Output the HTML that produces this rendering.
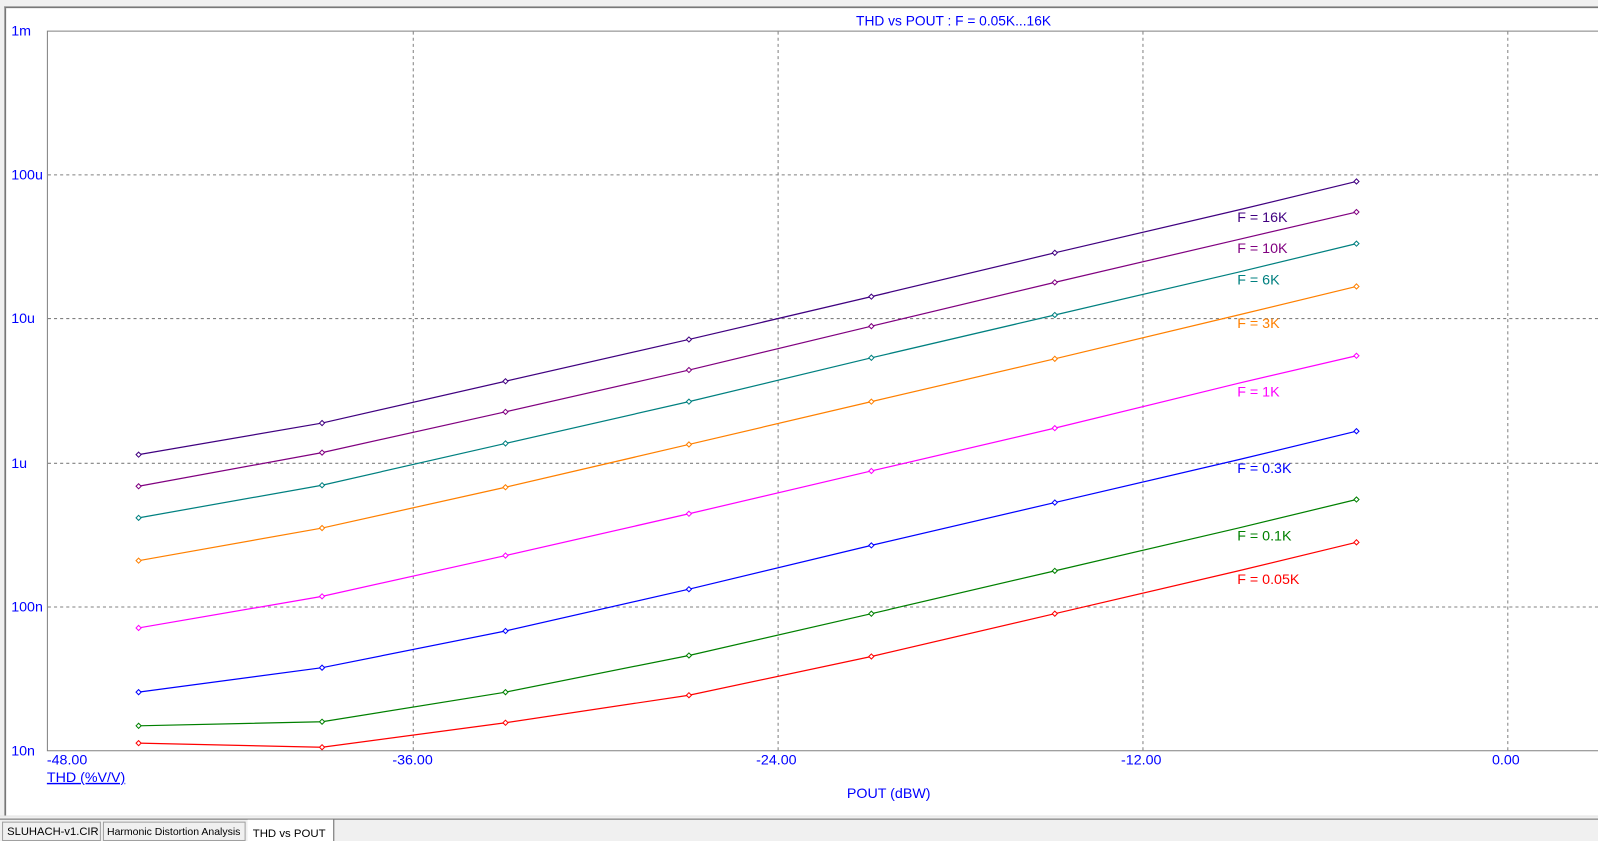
<!DOCTYPE html>
<html><head><meta charset="utf-8"><style>
html,body{margin:0;padding:0;background:#fff;overflow:hidden}
svg{display:block}
text{font-family:"Liberation Sans",sans-serif}
</style></head><body>
<svg width="1598" height="841" viewBox="0 0 1568 825" preserveAspectRatio="none" xmlns="http://www.w3.org/2000/svg">
<rect x="0" y="0" width="1568" height="825" fill="#fff"/>
<rect x="0" y="0" width="1568" height="6" fill="#f0f0f0"/>
<line x1="0" y1="6.5" x2="1568" y2="6.5" stroke="#a0a0a0"/>
<line x1="0" y1="7.5" x2="1568" y2="7.5" stroke="#696969"/>
<rect x="0" y="0" width="4" height="825" fill="#f0f0f0"/>
<line x1="4.5" y1="7" x2="4.5" y2="800" stroke="#a0a0a0"/>
<line x1="5.5" y1="8" x2="5.5" y2="800" stroke="#696969"/>
<rect x="0" y="800" width="1568" height="25" fill="#f0f0f0"/>
<line x1="0" y1="800.5" x2="1568" y2="800.5" stroke="#e3e3e3"/>
<line x1="0" y1="803.5" x2="1568" y2="803.5" stroke="#696969"/>
<rect x="2.5" y="806.5" width="96" height="18" fill="#f0f0f0" stroke="#a0a0a0"/>
<text x="7" y="819" font-size="11" fill="#000">SLUHACH-v1.CIR</text>
<rect x="101.5" y="806.5" width="139" height="18" fill="#f0f0f0" stroke="#a0a0a0"/>
<text x="105" y="819" font-size="10.3" fill="#000">Harmonic Distortion Analysis</text>
<rect x="243" y="804" width="84" height="21" fill="#fff"/>
<line x1="327.5" y1="804" x2="327.5" y2="825" stroke="#696969"/>
<text x="248" y="821" font-size="11.2" fill="#000">THD vs POUT</text>
<polyline points="1568,30.5 46.5,30.5 46.5,736.5 1568,736.5" fill="none" stroke="#808080"/>
<g stroke="#808080" stroke-dasharray="3,3" fill="none">
<line x1="47" y1="171.5" x2="1568" y2="171.5"/>
<line x1="47" y1="312.5" x2="1568" y2="312.5"/>
<line x1="47" y1="454.5" x2="1568" y2="454.5"/>
<line x1="47" y1="595.5" x2="1568" y2="595.5"/>
<line x1="405.5" y1="31" x2="405.5" y2="736"/>
<line x1="763.5" y1="31" x2="763.5" y2="736"/>
<line x1="1121.5" y1="31" x2="1121.5" y2="736"/>
<line x1="1479.5" y1="31" x2="1479.5" y2="736"/>
</g>
<g font-size="14" fill="#0000ff">
<text x="840" y="25" font-size="13.5">THD vs POUT : F = 0.05K...16K</text>
<text x="11" y="35">1m</text>
<text x="11" y="176">100u</text>
<text x="11" y="317">10u</text>
<text x="11" y="459">1u</text>
<text x="11" y="600">100n</text>
<text x="11" y="741">10n</text>
<text x="46" y="750">-48.00</text>
<text x="385" y="750">-36.00</text>
<text x="742" y="750">-24.00</text>
<text x="1100" y="750">-12.00</text>
<text x="1464" y="750">0.00</text>
<text x="46" y="767" text-decoration="underline">THD (%V/V)</text>
<text x="831" y="783">POUT (dBW)</text>
</g>
<defs><path id="d" d="M-2.5,0L0,-2.5L2.5,0L0,2.5Z" fill="#fff" stroke-width="1"/></defs>
<g fill="none" stroke-width="1.2">
<g stroke="#400080"><polyline points="136,446 316,415 496,374 676,333 855,291 1035,248 1215,206 1331,178"/></g>
<g stroke="#800080"><polyline points="136,477 316,444 496,404 676,363 855,320 1035,277 1215,235 1331,208"/></g>
<g stroke="#008080"><polyline points="136,508 316,476 496,435 676,394 855,351 1035,309 1215,267 1331,239"/></g>
<g stroke="#ff8000"><polyline points="136,550 316,518 496,478 676,436 855,394 1035,352 1215,309 1331,281"/></g>
<g stroke="#ff00ff"><polyline points="136,616 316,585 496,545 676,504 855,462 1035,420 1215,376 1331,349"/></g>
<g stroke="#0000ff"><polyline points="136,679 316,655 496,619 676,578 855,535 1035,493 1215,451 1331,423"/></g>
<g stroke="#008000"><polyline points="136,712 316,708 496,679 676,643 855,602 1035,560 1215,518 1331,490"/></g>
<g stroke="#ff0000"><polyline points="136,729 316,733 496,709 676,682 855,644 1035,602 1215,560 1331,532"/></g>
</g>
<g>
<g stroke="#400080"><use href="#d" x="136" y="446"/><use href="#d" x="316" y="415"/><use href="#d" x="496" y="374"/><use href="#d" x="676" y="333"/><use href="#d" x="855" y="291"/><use href="#d" x="1035" y="248"/><use href="#d" x="1331" y="178"/></g>
<g stroke="#800080"><use href="#d" x="136" y="477"/><use href="#d" x="316" y="444"/><use href="#d" x="496" y="404"/><use href="#d" x="676" y="363"/><use href="#d" x="855" y="320"/><use href="#d" x="1035" y="277"/><use href="#d" x="1331" y="208"/></g>
<g stroke="#008080"><use href="#d" x="136" y="508"/><use href="#d" x="316" y="476"/><use href="#d" x="496" y="435"/><use href="#d" x="676" y="394"/><use href="#d" x="855" y="351"/><use href="#d" x="1035" y="309"/><use href="#d" x="1331" y="239"/></g>
<g stroke="#ff8000"><use href="#d" x="136" y="550"/><use href="#d" x="316" y="518"/><use href="#d" x="496" y="478"/><use href="#d" x="676" y="436"/><use href="#d" x="855" y="394"/><use href="#d" x="1035" y="352"/><use href="#d" x="1331" y="281"/></g>
<g stroke="#ff00ff"><use href="#d" x="136" y="616"/><use href="#d" x="316" y="585"/><use href="#d" x="496" y="545"/><use href="#d" x="676" y="504"/><use href="#d" x="855" y="462"/><use href="#d" x="1035" y="420"/><use href="#d" x="1331" y="349"/></g>
<g stroke="#0000ff"><use href="#d" x="136" y="679"/><use href="#d" x="316" y="655"/><use href="#d" x="496" y="619"/><use href="#d" x="676" y="578"/><use href="#d" x="855" y="535"/><use href="#d" x="1035" y="493"/><use href="#d" x="1331" y="423"/></g>
<g stroke="#008000"><use href="#d" x="136" y="712"/><use href="#d" x="316" y="708"/><use href="#d" x="496" y="679"/><use href="#d" x="676" y="643"/><use href="#d" x="855" y="602"/><use href="#d" x="1035" y="560"/><use href="#d" x="1331" y="490"/></g>
<g stroke="#ff0000"><use href="#d" x="136" y="729"/><use href="#d" x="316" y="733"/><use href="#d" x="496" y="709"/><use href="#d" x="676" y="682"/><use href="#d" x="855" y="644"/><use href="#d" x="1035" y="602"/><use href="#d" x="1331" y="532"/></g>
</g>
<g font-size="14">
<text x="1214" y="218" fill="#400080">F = 16K</text>
<text x="1214" y="248" fill="#800080">F = 10K</text>
<text x="1214" y="279" fill="#008080">F = 6K</text>
<text x="1214" y="322" fill="#ff8000">F = 3K</text>
<text x="1214" y="389" fill="#ff00ff">F = 1K</text>
<text x="1214" y="464" fill="#0000ff">F = 0.3K</text>
<text x="1214" y="530" fill="#008000">F = 0.1K</text>
<text x="1214" y="573" fill="#ff0000">F = 0.05K</text>
</g>
</svg>
</body></html>
